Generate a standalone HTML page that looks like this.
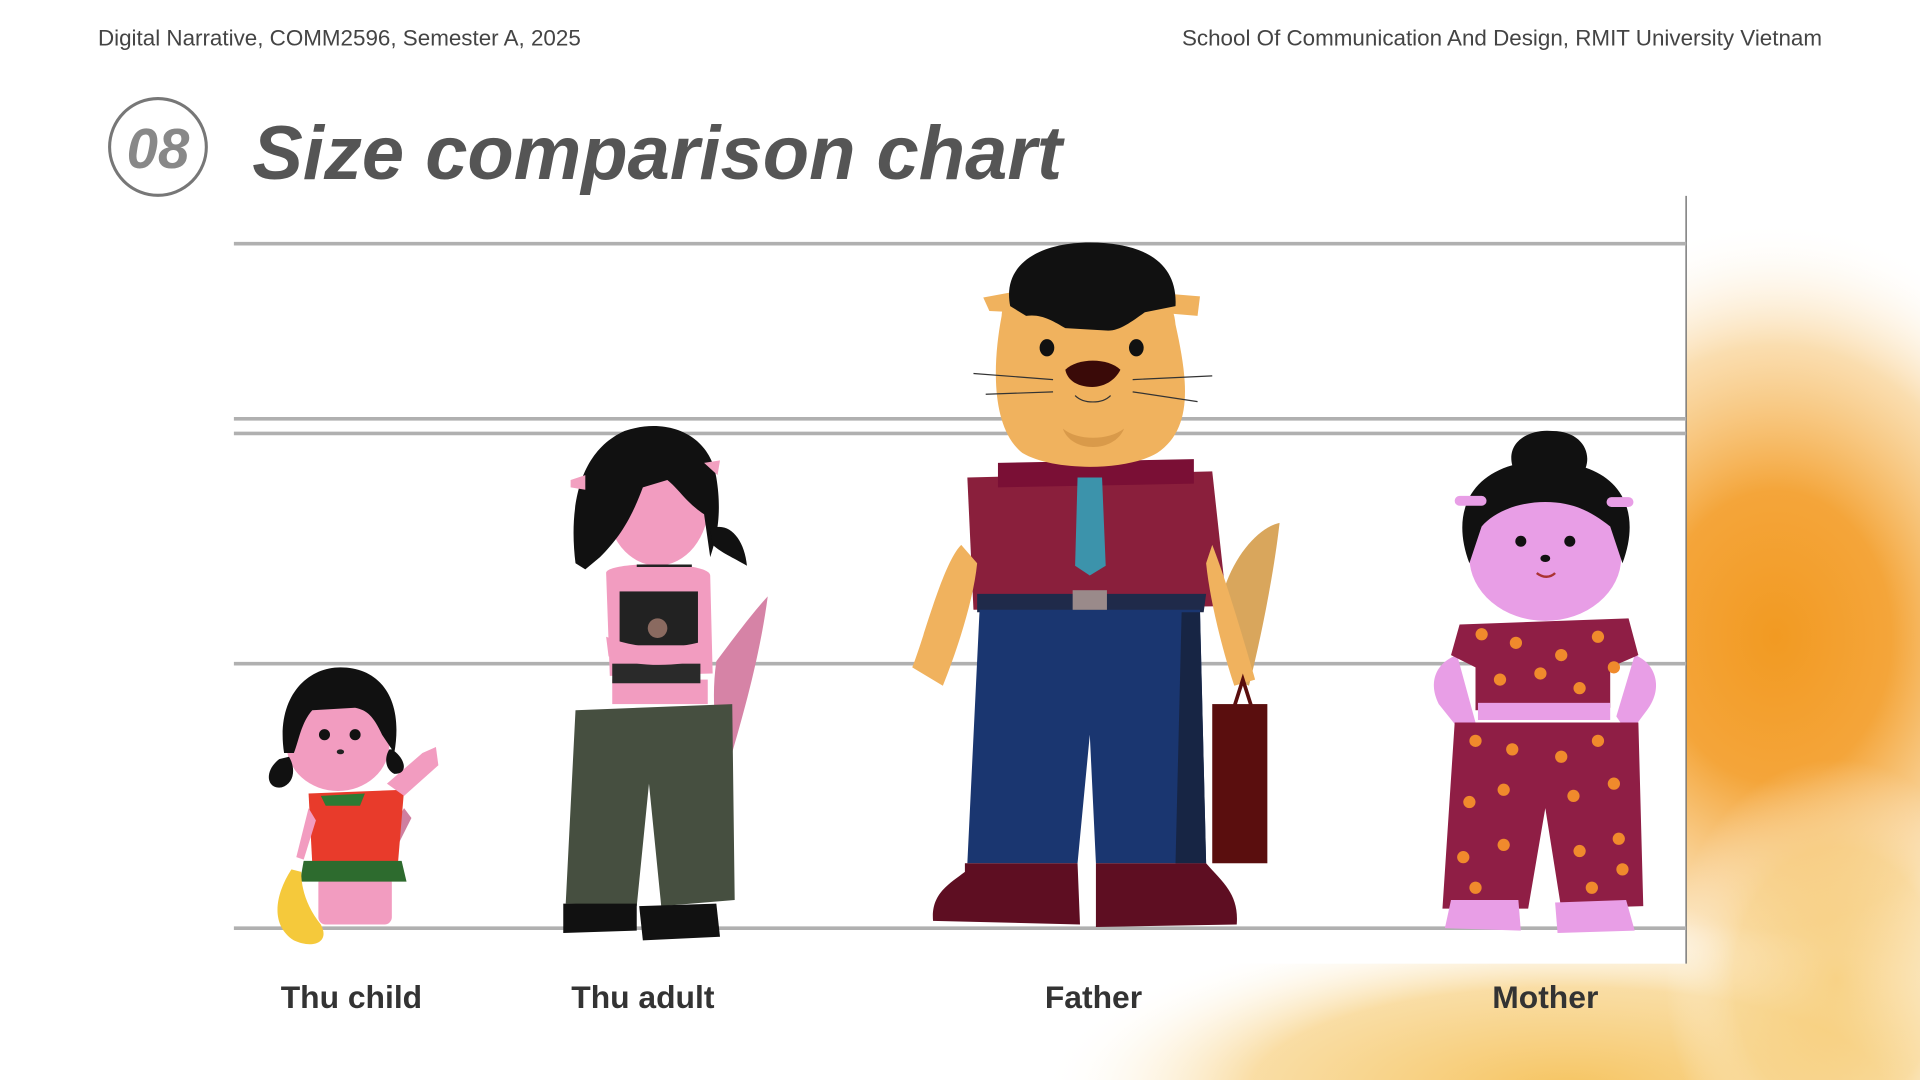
<!DOCTYPE html>
<html><head><meta charset="utf-8"><style>
html,body{margin:0;padding:0;width:1920px;height:1080px;overflow:hidden;background:#fff}
svg{display:block;position:absolute;left:0;top:0}
</style></head><body>
<svg width="1920" height="1080" viewBox="0 0 1568 882" xmlns="http://www.w3.org/2000/svg">
<defs>
<radialGradient id="og" cx="0.5" cy="0.5" r="0.5">
<stop offset="0" stop-color="#f29a22"/>
<stop offset="0.35" stop-color="#f4a53a"/>
<stop offset="0.7" stop-color="#f7c77a" stop-opacity="0.6"/>
<stop offset="1" stop-color="#fff" stop-opacity="0"/>
</radialGradient>
<radialGradient id="bg2" cx="0.5" cy="0.5" r="0.5">
<stop offset="0" stop-color="#f6c460"/>
<stop offset="0.6" stop-color="#f8d58e" stop-opacity="0.8"/>
<stop offset="1" stop-color="#fff" stop-opacity="0"/>
</radialGradient>
</defs>
<rect width="1568" height="882" fill="#fff"/>
<ellipse cx="1450" cy="520" rx="270" ry="340" fill="url(#og)"/>
<ellipse cx="1280" cy="890" rx="430" ry="140" fill="url(#bg2)"/>
<ellipse cx="1500" cy="800" rx="140" ry="180" fill="url(#bg2)" opacity="0.7"/>

<!-- header -->
<g font-family="Liberation Sans, sans-serif" font-size="18.3" fill="#444">
<text x="80" y="37">Digital Narrative, COMM2596, Semester A, 2025</text>
<text x="1488" y="37" text-anchor="end">School Of Communication And Design, RMIT University Vietnam</text>
</g>
<circle cx="129" cy="120" r="39.5" fill="none" stroke="#777" stroke-width="2.5"/>
<text x="129" y="137" text-anchor="middle" font-family="Liberation Sans, sans-serif" font-weight="bold" font-style="italic" font-size="46" fill="#888">08</text>
<text x="206" y="146" font-family="Liberation Sans, sans-serif" font-weight="bold" font-style="italic" font-size="62" fill="#555">Size comparison chart</text>

<!-- chart -->
<rect x="191" y="160" width="1186" height="627" fill="#fff"/>
<line x1="1377" y1="160" x2="1377" y2="787" stroke="#777" stroke-width="1.2"/>
<g stroke="#b0b0b0" stroke-width="3">
<line x1="191" y1="199" x2="1377" y2="199"/>
<line x1="191" y1="342" x2="1377" y2="342"/>
<line x1="191" y1="354" x2="1377" y2="354"/>
<line x1="191" y1="542" x2="1377" y2="542"/>
<line x1="191" y1="758" x2="1377" y2="758"/>
</g>

<!-- Thu child -->
<g>
<path d="M312 690 L330 660 L336 668 L320 700Z" fill="#cf7fa0"/>
<rect x="260" y="715" width="60" height="40" rx="6" fill="#f29cc0"/>
<path d="M252 648 L330 645 L325 705 L255 705Z" fill="#e83b2b"/>
<path d="M248 703 L328 703 L332 720 L245 720Z" fill="#2d6b2e"/>
<path d="M316 640 L345 615 L356 610 L358 625 L330 650Z" fill="#f29cc0"/>
<path d="M252 660 L242 700 L248 702 L258 670Z" fill="#f29cc0"/>
<path d="M238 710 C225 730 220 755 240 768 C255 775 270 770 262 755 C250 740 246 725 246 712Z" fill="#f5c93b"/>
<ellipse cx="276" cy="608" rx="42" ry="38" fill="#f29cc0"/>
<path d="M232 615 C225 570 250 545 278 545 C310 545 330 570 322 615 L312 600 C305 585 300 580 290 578 L255 580 C246 590 244 605 240 615Z" fill="#111"/>
<path d="M228 620 C215 630 218 645 230 643 C240 640 242 628 236 618Z" fill="#111"/>
<path d="M320 612 C330 618 335 632 322 632 C314 628 314 618 318 612Z" fill="#111"/>
<path d="M262 650 L298 648 L294 658 L266 658Z" fill="#2d7a33"/>
<circle cx="265" cy="600" r="4.5" fill="#111"/><circle cx="290" cy="600" r="4.5" fill="#111"/>
<ellipse cx="278" cy="614" rx="3" ry="2" fill="#222"/>
</g>

<!-- Thu adult -->
<g>
<path d="M585 540 C600 520 615 500 627 487 C620 540 605 590 595 625 C585 610 580 575 585 540Z" fill="#d683a6"/>
<path d="M470 580 L598 575 L600 735 L540 740 L530 640 L520 740 L462 738Z" fill="#464f40"/>
<path d="M460 738 L520 738 L520 760 L460 762Z" fill="#111"/>
<path d="M522 740 L585 738 L588 765 L525 768Z" fill="#111"/>
<rect x="500" y="555" width="78" height="20" fill="#f29cc0"/>
<path d="M495 468 C495 458 580 458 580 470 L582 550 L498 552Z" fill="#f29cc0"/>
<rect x="506" y="483" width="64" height="44" fill="#222"/>
<rect x="500" y="542" width="72" height="16" fill="#2a2a2a"/>
<ellipse cx="537" cy="513" rx="8" ry="8" fill="#8a6a60"/>
<path d="M495 520 C520 530 550 532 580 522 L578 538 C550 545 520 545 497 536Z" fill="#f29cc0"/>
<ellipse cx="537" cy="410" rx="42" ry="52" fill="#f29cc0"/>
<path d="M470 460 C465 420 470 370 510 352 C545 340 580 355 585 390 C590 420 585 440 580 455 L575 420 C560 410 555 400 545 392 L525 398 C515 425 505 440 490 455 L478 465Z" fill="#111"/>
<path d="M580 432 C595 425 608 440 610 462 C598 455 590 452 582 445Z" fill="#111"/>
<path d="M466 392 L478 388 L478 400 L466 398Z" fill="#f2a0c0"/>
<path d="M575 378 L588 376 L586 388Z" fill="#f2a0c0"/>
<line x1="520" y1="462" x2="565" y2="462" stroke="#222" stroke-width="2"/>
</g>

<!-- Father -->
<g>
<path d="M1000 480 C1010 450 1030 430 1045 427 C1040 470 1030 520 1020 560 C1005 555 995 520 1000 480Z" fill="#d9a65c"/>
<path d="M790 390 L990 385 L1002 495 L795 498Z" fill="#8a1f3c"/>
<path d="M815 378 L975 375 L975 395 L815 398Z" fill="#7a0f35"/>
<path d="M880 390 L900 390 L903 462 L890 470 L878 462Z" fill="#3c93ab"/>
<path d="M785 445 C770 460 755 520 745 545 L770 560 C782 530 795 490 798 460Z" fill="#f0b25e"/>
<path d="M990 445 C1000 470 1015 520 1025 555 L1008 560 C998 530 988 490 985 460Z" fill="#f0b25e"/>
<path d="M798 485 L985 485 L983 500 L798 500Z" fill="#1f2a4a"/>
<path d="M800 498 L980 498 L985 705 L895 705 L890 600 L880 705 L790 705Z" fill="#1a3670"/>
<path d="M965 500 L980 500 L985 705 L960 705Z" fill="#172544"/>
<rect x="876" y="482" width="28" height="16" fill="#9a8a8a"/>
<path d="M788 705 L880 705 L882 755 L762 752 C760 730 775 722 788 712Z" fill="#5e0e22"/>
<path d="M895 705 L985 705 C998 720 1012 730 1010 755 L895 757Z" fill="#5e0e22"/>
<rect x="990" y="575" width="45" height="130" fill="#5a0e0e"/>
<path d="M1008 577 L1015 555 L1022 577" fill="none" stroke="#5a0e0e" stroke-width="3"/>
<path d="M803 243 L830 238 L830 255 L808 254Z" fill="#f0b25e"/>
<path d="M955 240 L980 242 L978 258 L955 256Z" fill="#f0b25e"/>
<path d="M818 258 C820 230 850 230 890 228 C930 228 958 235 960 265 C970 310 975 350 945 370 C920 385 860 385 835 370 C810 350 810 300 818 258Z" fill="#f0b25e"/>
<path d="M825 250 C818 215 850 198 890 198 C935 198 962 215 960 250 L935 255 C925 262 915 270 905 270 L870 268 C860 262 850 256 838 258Z" fill="#111"/>
<ellipse cx="855" cy="284" rx="6" ry="7" fill="#111"/>
<ellipse cx="928" cy="284" rx="6" ry="7" fill="#111"/>
<path d="M870 302 C880 292 905 292 915 302 C910 312 900 316 892 316 C882 316 872 312 870 302Z" fill="#3a0a08"/>
<path d="M868 350 C880 360 905 360 918 350 C910 370 875 370 868 350Z" fill="#d99a4a"/>
<g stroke="#333" stroke-width="1" fill="none">
<path d="M795 305 L860 310"/><path d="M805 322 L860 320"/>
<path d="M925 310 L990 307"/><path d="M925 320 L978 328"/>
<path d="M878 323 C885 330 900 330 907 323"/>
</g>
</g>

<!-- Mother -->
<g>
<path d="M1190 535 C1175 540 1165 555 1175 575 L1195 600 L1205 590Z" fill="#e89ee6"/>
<path d="M1335 535 C1350 540 1360 560 1345 580 L1330 600 L1320 585Z" fill="#e89ee6"/>
<path d="M1192 510 L1330 505 L1338 535 L1315 545 L1315 578 L1205 580 L1205 545 L1185 535Z" fill="#8f1e45"/>
<rect x="1207" y="574" width="108" height="14" fill="#e89ee6"/>
<path d="M1188 590 L1338 590 L1342 740 L1275 742 L1262 660 L1248 742 L1178 742Z" fill="#8f1e45"/>
<path d="M1185 735 L1240 735 L1242 760 L1180 758Z" fill="#e89ee6"/>
<path d="M1270 737 L1328 735 L1335 760 L1272 762Z" fill="#e89ee6"/>
<ellipse cx="1262" cy="455" rx="62" ry="52" fill="#e89ee6"/>
<path d="M1200 460 C1185 420 1200 390 1235 380 C1230 360 1250 350 1268 352 C1290 352 1300 368 1295 382 C1325 392 1340 420 1325 460 L1315 430 C1300 418 1285 410 1262 410 C1240 410 1220 418 1210 430Z" fill="#111"/>
<rect x="1188" y="405" width="26" height="8" rx="4" fill="#e89ee6"/>
<rect x="1312" y="406" width="22" height="8" rx="4" fill="#e89ee6"/>
<circle cx="1242" cy="442" r="4.5" fill="#111"/><circle cx="1282" cy="442" r="4.5" fill="#111"/>
<ellipse cx="1262" cy="456" rx="4" ry="3" fill="#111"/>
<path d="M1255 468 C1260 472 1266 472 1270 468" stroke="#a33" stroke-width="2" fill="none"/>
<g fill="#f08a2c">
<circle cx="1210" cy="518" r="5"/><circle cx="1238" cy="525" r="5"/><circle cx="1275" cy="535" r="5"/><circle cx="1305" cy="520" r="5"/>
<circle cx="1225" cy="555" r="5"/><circle cx="1258" cy="550" r="5"/><circle cx="1290" cy="562" r="5"/><circle cx="1318" cy="545" r="5"/>
<circle cx="1205" cy="605" r="5"/><circle cx="1235" cy="612" r="5"/><circle cx="1275" cy="618" r="5"/><circle cx="1305" cy="605" r="5"/>
<circle cx="1200" cy="655" r="5"/><circle cx="1228" cy="645" r="5"/><circle cx="1285" cy="650" r="5"/><circle cx="1318" cy="640" r="5"/>
<circle cx="1195" cy="700" r="5"/><circle cx="1228" cy="690" r="5"/><circle cx="1290" cy="695" r="5"/><circle cx="1322" cy="685" r="5"/>
<circle cx="1205" cy="725" r="5"/><circle cx="1300" cy="725" r="5"/><circle cx="1325" cy="710" r="5"/>
</g>
</g>

<!-- labels -->
<g font-family="Liberation Sans, sans-serif" font-weight="bold" font-size="26" fill="#333" text-anchor="middle">
<text x="287" y="823">Thu child</text>
<text x="525" y="823">Thu adult</text>
<text x="893" y="823">Father</text>
<text x="1262" y="823">Mother</text>
</g>
</svg>
</body></html>
